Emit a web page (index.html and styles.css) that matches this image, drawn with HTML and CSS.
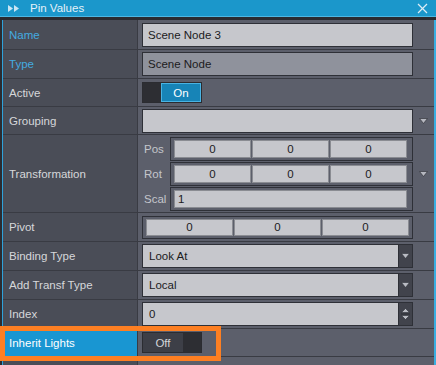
FILE: index.html
```html
<!DOCTYPE html>
<html lang="en">
<head>
    <meta charset="UTF-8">
    <title>Pin Values</title>
    <link rel="stylesheet" href="styles.css">
</head>
<body>
    <div class="window">
        <div class="titlebar">
            <svg class="title-icon" width="12" height="7" viewBox="0 0 12 7">
                <polygon points="0,0 5,3.5 0,7" />
                <polygon points="6,0 11,3.5 6,7" />
            </svg>
            <span class="title">Pin Values</span>
            <svg class="close" width="11" height="11" viewBox="0 0 11 11">
                <line x1="1" y1="1" x2="10" y2="10" />
                <line x1="10" y1="1" x2="1" y2="10" />
            </svg>
        </div>
        <div class="divider"></div>

        <div class="grid">
            <div class="row row-tall">
                <div class="label label-key">Name</div>
                <div class="value"><div class="field">Scene Node 3</div></div>
            </div>
            <div class="row">
                <div class="label label-key">Type</div>
                <div class="value"><div class="field field-muted">Scene Node</div></div>
            </div>
            <div class="row row-short">
                <div class="label">Active</div>
                <div class="value">
                    <div class="toggle">
                        <span class="toggle-knob"></span>
                        <span class="toggle-on">On</span>
                    </div>
                </div>
            </div>
            <div class="row row-short">
                <div class="label">Grouping</div>
                <div class="value">
                    <div class="field"></div>
                    <div class="side-arrow">
                        <svg width="9" height="6" viewBox="0 0 9 6"><polygon points="0.5,0.5 8.5,0.5 4.5,5.5" /></svg>
                    </div>
                </div>
            </div>
            <div class="row row-transform">
                <div class="label">Transformation</div>
                <div class="value value-flush">
                    <div class="transform">
                        <div class="sub-row">
                            <span class="sub-label">Pos</span>
                            <div class="vec">
                                <span class="cell">0</span><span class="cell">0</span><span class="cell">0</span>
                            </div>
                        </div>
                        <div class="sub-row">
                            <span class="sub-label">Rot</span>
                            <div class="vec">
                                <span class="cell">0</span><span class="cell">0</span><span class="cell">0</span>
                            </div>
                        </div>
                        <div class="sub-row">
                            <span class="sub-label">Scal</span>
                            <div class="vec">
                                <span class="cell cell-left">1</span>
                            </div>
                        </div>
                    </div>
                    <div class="side-arrow">
                        <svg width="9" height="6" viewBox="0 0 9 6"><polygon points="0.5,0.5 8.5,0.5 4.5,5.5" /></svg>
                    </div>
                </div>
            </div>
            <div class="row">
                <div class="label">Pivot</div>
                <div class="value">
                    <div class="vec vec-pivot">
                        <span class="cell">0</span><span class="cell">0</span><span class="cell">0</span>
                    </div>
                </div>
            </div>
            <div class="row">
                <div class="label">Binding Type</div>
                <div class="value">
                    <div class="field field-select">
                        <span class="field-text">Look At</span>
                        <span class="select-btn">
                            <svg width="9" height="6" viewBox="0 0 9 6"><polygon points="0.5,0.5 8.5,0.5 4.5,5.5" /></svg>
                        </span>
                    </div>
                </div>
            </div>
            <div class="row">
                <div class="label">Add Transf Type</div>
                <div class="value">
                    <div class="field field-select">
                        <span class="field-text">Local</span>
                        <span class="select-btn">
                            <svg width="9" height="6" viewBox="0 0 9 6"><polygon points="0.5,0.5 8.5,0.5 4.5,5.5" /></svg>
                        </span>
                    </div>
                </div>
            </div>
            <div class="row">
                <div class="label">Index</div>
                <div class="value">
                    <div class="field field-select">
                        <span class="field-text">0</span>
                        <span class="select-btn spin">
                            <svg width="9" height="12" viewBox="0 0 9 12">
                                <polygon points="0.5,4.5 8.5,4.5 4.5,0.5" />
                                <line x1="0" y1="6" x2="9" y2="6" />
                                <polygon points="0.5,7.5 8.5,7.5 4.5,11.5" />
                            </svg>
                        </span>
                    </div>
                </div>
            </div>
            <div class="row row-short">
                <div class="label label-selected">Inherit Lights</div>
                <div class="value">
                    <div class="toggle toggle-off">
                        <span class="toggle-text">Off</span>
                        <span class="toggle-knob"></span>
                    </div>
                </div>
            </div>
            <div class="row">
                <div class="label"></div>
                <div class="value"></div>
            </div>
        </div>

        <div class="focus-ring"></div>
    </div>
</body>
</html>
```

FILE: styles.css
```css
body {
    margin: 0;
    background-color: #2b2c31;
    font-family: 'Liberation Sans', Arial, sans-serif;
    font-size: 11.5px;
    overflow: hidden;
}
.window {
    position: relative;
    width: 436px;
    height: 365px;
    overflow: hidden;
}
.titlebar {
    height: 16px;
    background: #1b97cb;
    border-bottom: 1px solid #4db7e3;
    display: flex;
    align-items: center;
    padding: 0 8px;
    color: #e4f1f8;
}
.title-icon {
    fill: #cbe6f4;
    margin-right: 10px;
}
.title {
    flex: 1;
    font-size: 11.5px;
}
.close {
    stroke: #dcedf6;
    stroke-width: 1.3;
    margin-right: 0;
}
.divider {
    height: 3px;
    background: #2a2b30;
}
.grid {
    margin-left: 2px;
    border-left: 1px solid #2ea2da;
    border-right: 2px solid #3aaee0;
    background: #5c5f6b;
}
.row {
    display: grid;
    grid-template-columns: 135px 1fr;
    height: 28px;
    border-bottom: 1px solid #393b43;
}
.row-tall {
    height: 29px;
}
.row-short {
    height: 27px;
}
.row-transform {
    height: 77px;
}
.label {
    background: #4a4d57;
    border-right: 1px solid #393b43;
    color: #d6d7da;
    display: flex;
    align-items: center;
    padding-left: 6px;
}
.label-key {
    color: #44abe0;
}
.label-selected {
    background: #1996d2;
    color: #ffffff;
}
.value {
    display: flex;
    align-items: center;
    padding-left: 4px;
}
.value-flush {
    padding-left: 0;
}
.field {
    box-sizing: border-box;
    width: 271px;
    height: 24px;
    border: 1px solid #2e3037;
    background: #c6c7cc;
    color: #1b1b1d;
    display: flex;
    align-items: center;
    padding-left: 5px;
}
.field-muted {
    background: #8f929c;
}
.field-select {
    padding-left: 0;
}
.field-text {
    flex: 1;
    padding-left: 6px;
}
.select-btn {
    width: 13px;
    align-self: stretch;
    background: #41434c;
    border-left: 1px solid #2e3037;
    display: flex;
    align-items: center;
    justify-content: center;
}
.select-btn svg {
    fill: #b9bbc3;
    stroke: #2e3037;
    stroke-width: 0.6;
}
.spin svg line {
    stroke: #2e3037;
    stroke-width: 1;
}
.side-arrow {
    flex: 1;
    display: flex;
    justify-content: center;
    align-items: center;
}
.side-arrow svg {
    fill: #b6b8c0;
    stroke: #33353c;
    stroke-width: 0.7;
}
.toggle {
    box-sizing: border-box;
    width: 60px;
    height: 21px;
    border: 1px solid #2b2c31;
    display: flex;
    background: #2d2e33;
}
.toggle-knob {
    width: 18px;
    background: #2d2e33;
}
.toggle-on {
    flex: 1;
    background: #1784b7;
    border: 1px solid #49b3e3;
    color: #ffffff;
    display: flex;
    align-items: center;
    justify-content: center;
}
.toggle-off .toggle-text {
    flex: 1;
    background: #3d3f47;
    color: #d3d4d8;
    display: flex;
    align-items: center;
    justify-content: center;
}
.transform {
    width: 275px;
    display: flex;
    flex-direction: column;
    gap: 1px;
    padding-top: 2px;
    align-self: flex-start;
}
.sub-row {
    display: flex;
    align-items: center;
}
.sub-label {
    width: 26px;
    padding-left: 6px;
    color: #c4c6cb;
}
.vec {
    box-sizing: border-box;
    width: 243px;
    height: 24px;
    border: 1px solid #2e3037;
    padding: 2px 5px 2px 3px;
    display: flex;
    gap: 1px;
}
.vec-pivot {
    width: 271px;
    height: 23px;
    padding: 2px 3px 2px 3px;
}
.cell {
    flex: 1;
    background: #c6c7cc;
    border: 1px solid #8a8c92;
    color: #1b1b1d;
    display: flex;
    align-items: center;
    justify-content: center;
}
.cell-left {
    justify-content: flex-start;
    padding-left: 3px;
}
.focus-ring {
    position: absolute;
    left: 0;
    top: 326px;
    width: 221px;
    height: 35px;
    box-sizing: border-box;
    border: 5px solid #fd7f22;
}
```
